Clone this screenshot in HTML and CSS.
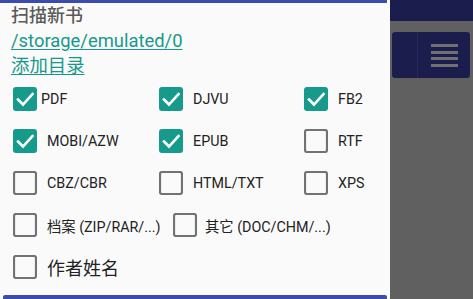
FILE: index.html
```html
<!DOCTYPE html>
<html>
<head>
<meta charset="utf-8">
<link rel="stylesheet" href="styles.css">
</head>
<body>
<div class="dialog">
  <div class="topbar"></div>
  <div class="head">
    <div class="title">扫描新书</div>
    <div class="link">/storage/emulated/0</div>
    <div class="link">添加目录</div>
  </div>
  <div class="grid">
    <div class="cell"><span class="cb on"><svg viewBox="0 0 24 24"><rect x="0" y="0" width="24" height="24" rx="3"/><polyline points="5,12.5 10,17.5 19.5,7"/></svg></span><span class="lbl near">PDF</span></div>
    <div class="cell"><span class="cb on"><svg viewBox="0 0 24 24"><rect x="0" y="0" width="24" height="24" rx="3"/><polyline points="5,12.5 10,17.5 19.5,7"/></svg></span><span class="lbl">DJVU</span></div>
    <div class="cell"><span class="cb on"><svg viewBox="0 0 24 24"><rect x="0" y="0" width="24" height="24" rx="3"/><polyline points="5,12.5 10,17.5 19.5,7"/></svg></span><span class="lbl">FB2</span></div>

    <div class="cell"><span class="cb on"><svg viewBox="0 0 24 24"><rect x="0" y="0" width="24" height="24" rx="3"/><polyline points="5,12.5 10,17.5 19.5,7"/></svg></span><span class="lbl">MOBI/AZW</span></div>
    <div class="cell"><span class="cb on"><svg viewBox="0 0 24 24"><rect x="0" y="0" width="24" height="24" rx="3"/><polyline points="5,12.5 10,17.5 19.5,7"/></svg></span><span class="lbl">EPUB</span></div>
    <div class="cell"><span class="cb off"><svg viewBox="0 0 24 24"><rect x="1" y="1" width="22" height="22" rx="2"/></svg></span><span class="lbl">RTF</span></div>

    <div class="cell"><span class="cb off"><svg viewBox="0 0 24 24"><rect x="1" y="1" width="22" height="22" rx="2"/></svg></span><span class="lbl">CBZ/CBR</span></div>
    <div class="cell"><span class="cb off"><svg viewBox="0 0 24 24"><rect x="1" y="1" width="22" height="22" rx="2"/></svg></span><span class="lbl">HTML/TXT</span></div>
    <div class="cell"><span class="cb off"><svg viewBox="0 0 24 24"><rect x="1" y="1" width="22" height="22" rx="2"/></svg></span><span class="lbl">XPS</span></div>
  </div>
  <div class="row">
    <div class="cell wide"><span class="cb off"><svg viewBox="0 0 24 24"><rect x="1" y="1" width="22" height="22" rx="2"/></svg></span><span class="lbl">档案 (ZIP/RAR/...)</span></div>
    <div class="cell"><span class="cb off"><svg viewBox="0 0 24 24"><rect x="1" y="1" width="22" height="22" rx="2"/></svg></span><span class="lbl tight">其它 (DOC/CHM/...)</span></div>
  </div>
  <div class="row">
    <div class="cell"><span class="cb off"><svg viewBox="0 0 24 24"><rect x="1" y="1" width="22" height="22" rx="2"/></svg></span><span class="lbl big">作者姓名</span></div>
  </div>
  <div class="bottombar"></div>
</div>
<div class="side">
  <div class="navtop"></div>
  <div class="navbox">
    <div class="navleft"></div>
    <div class="menu"><i></i><i></i><i></i><i></i></div>
  </div>
</div>
</body>
</html>
```
FILE: styles.css
```css
html, body {
  margin: 0;
  padding: 0;
}
body {
  width: 473px;
  height: 299px;
  overflow: hidden;
  display: flex;
  font-family: Roboto, "Noto Sans CJK SC", sans-serif;
  background: #606060;
}
.dialog {
  width: 390px;
  height: 299px;
  background: #fafafa;
  display: flex;
  flex-direction: column;
}
.topbar {
  width: 387px;
  height: 3px;
  background: #3c4cad;
  flex: none;
}
.head {
  padding-left: 11px;
  font-size: 18px;
  line-height: 25px;
  height: 75px;
}
.title {
  color: #5a5a5a;
  font-weight: 500;
}
.link {
  color: #17998a;
  font-size: 18.4px;
  text-decoration: underline;
  text-underline-offset: 2px;
}
.grid {
  display: grid;
  grid-template-columns: 146px 145px auto;
  grid-auto-rows: 42px;
  padding-left: 13px;
}
.row {
  display: flex;
  height: 42px;
  padding-left: 13px;
}
.cell {
  display: flex;
  align-items: center;
  height: 42px;
}
.cell.wide {
  width: 160px;
}
.cb {
  width: 24px;
  height: 24px;
  flex: none;
  display: block;
}
.cb svg {
  width: 24px;
  height: 24px;
  display: block;
}
.cb.on rect {
  fill: #159a8b;
}
.cb.on polyline {
  fill: none;
  stroke: #ffffff;
  stroke-width: 2.6;
  stroke-linecap: square;
}
.cb.off rect {
  fill: none;
  stroke: #727272;
  stroke-width: 2.2;
}
.lbl {
  margin-left: 10px;
  font-size: 14.3px;
  color: #222222;
}
.lbl.near {
  margin-left: 4px;
}
.lbl.tight {
  margin-left: 8px;
}
.lbl.big {
  font-size: 18px;
}
.bottombar {
  margin-top: auto;
  margin-left: 3px;
  width: 384px;
  height: 4px;
  background: #3c4cad;
  border-radius: 2px 2px 0 0;
}
.side {
  flex: 1;
  display: flex;
  flex-direction: column;
  background: #606060;
}
.navtop {
  height: 21px;
  background: #1b1e4c;
}
.navbox {
  margin: 11px 3px 0 2px;
  height: 46px;
  background: #1b1e4c;
  border-radius: 3px;
  display: flex;
}
.navleft {
  width: 25px;
  border-right: 1px solid #23275a;
}
.menu {
  margin-left: 13px;
  margin-top: 12px;
  width: 27px;
  display: flex;
  flex-direction: column;
  gap: 3.5px;
}
.menu i {
  display: block;
  height: 3px;
  background: #6f6f74;
}
```
